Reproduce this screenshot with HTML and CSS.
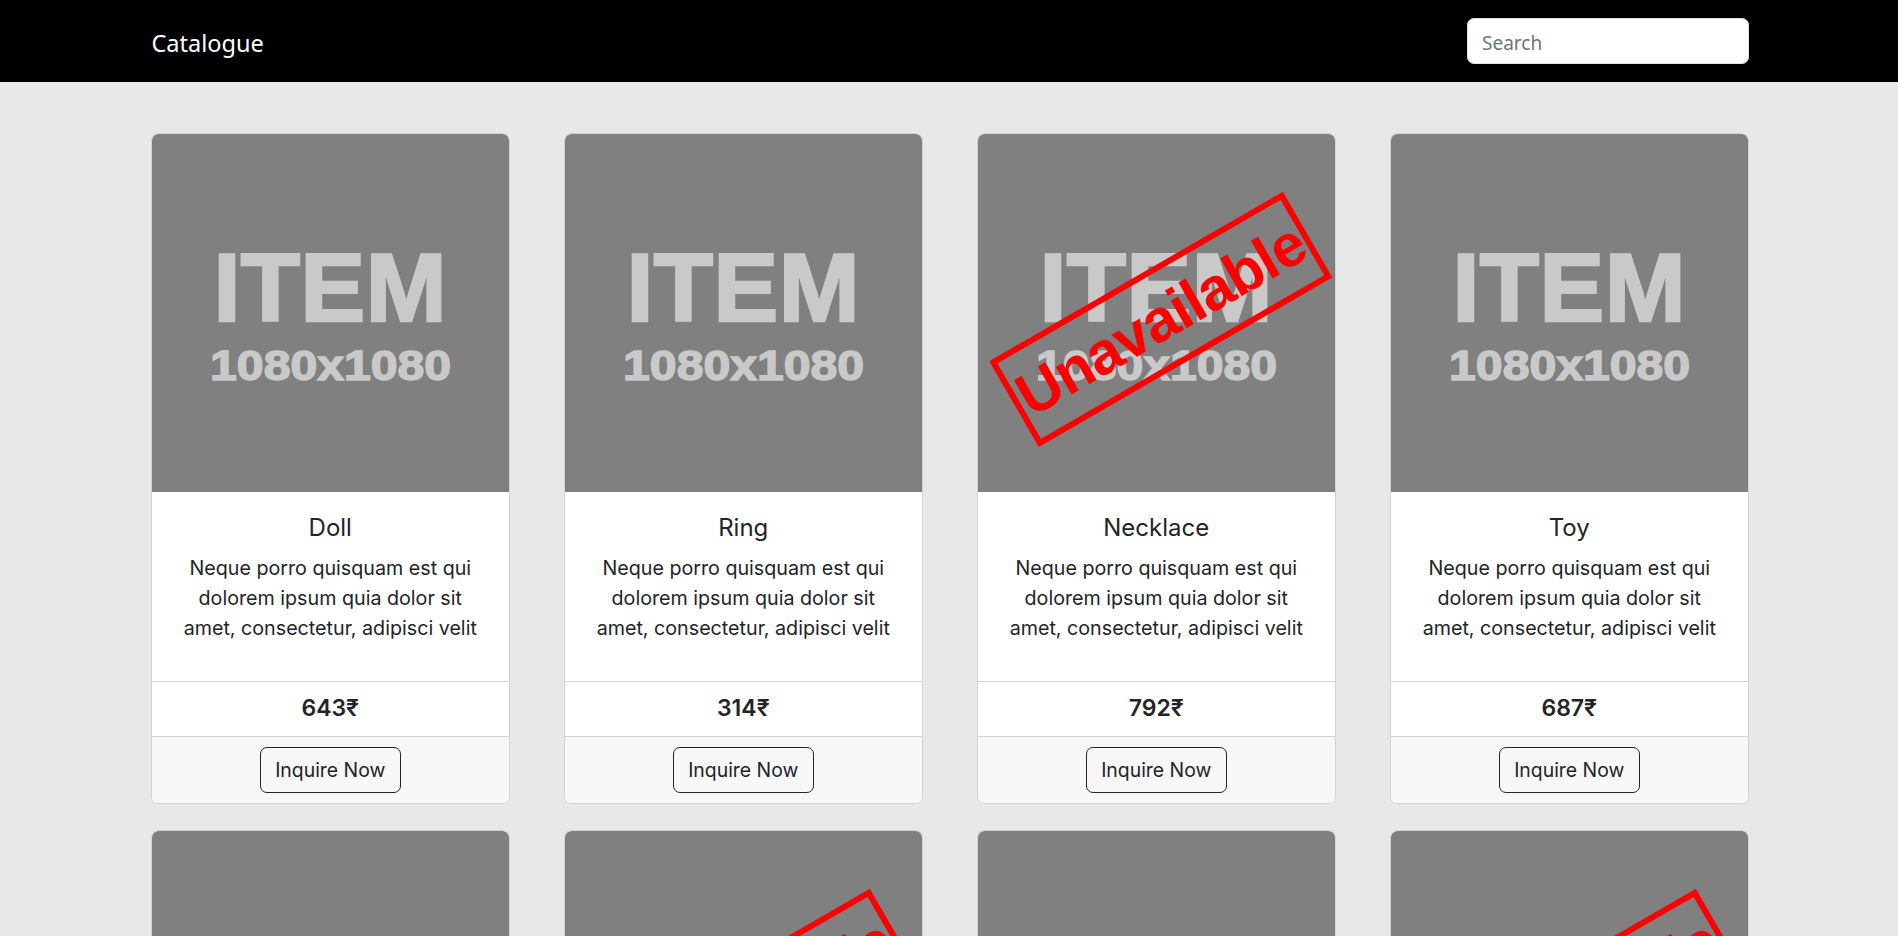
FILE: index.html
```html
<!DOCTYPE html>
<html lang="en">
<head>
<meta charset="utf-8">
<title>Catalogue</title>
<link rel="stylesheet" href="styles.css">
</head>
<body>
<header class="navbar">
  <div class="nav-inner">
    <a class="brand" href="#">Catalogue</a>
    <input class="search" type="search" placeholder="Search">
  </div>
</header>
<main class="catalogue">
  <article class="card">
    <div class="card-img">
      <div class="ph"><span class="ph-title">ITEM</span><span class="ph-size">1080x1080</span></div>
    </div>
    <div class="card-body">
      <h5 class="card-title">Doll</h5>
      <p class="card-text">Neque porro quisquam est qui dolorem ipsum quia dolor sit amet, consectetur, adipisci velit</p>
    </div>
    <div class="card-price">643₹</div>
    <div class="card-footer"><button class="btn">Inquire Now</button></div>
  </article>
  <article class="card">
    <div class="card-img">
      <div class="ph"><span class="ph-title">ITEM</span><span class="ph-size">1080x1080</span></div>
    </div>
    <div class="card-body">
      <h5 class="card-title">Ring</h5>
      <p class="card-text">Neque porro quisquam est qui dolorem ipsum quia dolor sit amet, consectetur, adipisci velit</p>
    </div>
    <div class="card-price">314₹</div>
    <div class="card-footer"><button class="btn">Inquire Now</button></div>
  </article>
  <article class="card">
    <div class="card-img">
      <div class="ph"><span class="ph-title">ITEM</span><span class="ph-size">1080x1080</span></div>
      <div class="stamp">Unavailable</div>
    </div>
    <div class="card-body">
      <h5 class="card-title">Necklace</h5>
      <p class="card-text">Neque porro quisquam est qui dolorem ipsum quia dolor sit amet, consectetur, adipisci velit</p>
    </div>
    <div class="card-price">792₹</div>
    <div class="card-footer"><button class="btn">Inquire Now</button></div>
  </article>
  <article class="card">
    <div class="card-img">
      <div class="ph"><span class="ph-title">ITEM</span><span class="ph-size">1080x1080</span></div>
    </div>
    <div class="card-body">
      <h5 class="card-title">Toy</h5>
      <p class="card-text">Neque porro quisquam est qui dolorem ipsum quia dolor sit amet, consectetur, adipisci velit</p>
    </div>
    <div class="card-price">687₹</div>
    <div class="card-footer"><button class="btn">Inquire Now</button></div>
  </article>
  <article class="card">
    <div class="card-img">
      <div class="ph"><span class="ph-title">ITEM</span><span class="ph-size">1080x1080</span></div>
    </div>
    <div class="card-body">
      <h5 class="card-title">Bracelet</h5>
      <p class="card-text">Neque porro quisquam est qui dolorem ipsum quia dolor sit amet, consectetur, adipisci velit</p>
    </div>
    <div class="card-price">455₹</div>
    <div class="card-footer"><button class="btn">Inquire Now</button></div>
  </article>
  <article class="card">
    <div class="card-img">
      <div class="ph"><span class="ph-title">ITEM</span><span class="ph-size">1080x1080</span></div>
      <div class="stamp">Unavailable</div>
    </div>
    <div class="card-body">
      <h5 class="card-title">Watch</h5>
      <p class="card-text">Neque porro quisquam est qui dolorem ipsum quia dolor sit amet, consectetur, adipisci velit</p>
    </div>
    <div class="card-price">921₹</div>
    <div class="card-footer"><button class="btn">Inquire Now</button></div>
  </article>
  <article class="card">
    <div class="card-img">
      <div class="ph"><span class="ph-title">ITEM</span><span class="ph-size">1080x1080</span></div>
    </div>
    <div class="card-body">
      <h5 class="card-title">Earrings</h5>
      <p class="card-text">Neque porro quisquam est qui dolorem ipsum quia dolor sit amet, consectetur, adipisci velit</p>
    </div>
    <div class="card-price">538₹</div>
    <div class="card-footer"><button class="btn">Inquire Now</button></div>
  </article>
  <article class="card">
    <div class="card-img">
      <div class="ph"><span class="ph-title">ITEM</span><span class="ph-size">1080x1080</span></div>
      <div class="stamp">Unavailable</div>
    </div>
    <div class="card-body">
      <h5 class="card-title">Ball</h5>
      <p class="card-text">Neque porro quisquam est qui dolorem ipsum quia dolor sit amet, consectetur, adipisci velit</p>
    </div>
    <div class="card-price">276₹</div>
    <div class="card-footer"><button class="btn">Inquire Now</button></div>
  </article>
</main>
</body>
</html>
```
FILE: styles.css
```css
* { box-sizing: border-box; }

html, body {
  margin: 0;
  padding: 0;
}

body {
  background: #e8e8e8;
  color: #212529;
  font-family: Inter, "Noto Sans", sans-serif;
}

.navbar {
  background: #000;
  height: 82px;
}

.nav-inner {
  width: 1599px;
  height: 82px;
  margin: 0 auto;
  padding-left: 2px;
  display: flex;
  align-items: center;
  justify-content: space-between;
}

.brand {
  font-family: "Noto Sans", "Open Sans", sans-serif;
  font-size: 23.5px;
  line-height: 36px;
  padding-top: 4px;
  color: #fff;
  text-decoration: none;
}

.search {
  width: 282px;
  height: 46px;
  border: 1px solid #dee2e6;
  border-radius: 7px;
  background: #fff;
  padding: 3px 14.5px 0;
  font-family: "Noto Sans", "Open Sans", sans-serif;
  font-size: 19px;
  color: #212529;
  outline: none;
}

.search::placeholder {
  color: #6c757d;
}

.catalogue {
  width: 1600px;
  margin: 0 auto;
  padding: 51px 0 0 1.5px;
  display: grid;
  grid-template-columns: repeat(4, 1fr);
  column-gap: 53.5px;
  row-gap: 26px;
}

.card {
  background: #fff;
  border: 1px solid #d3d3d3;
  border-radius: 7px;
  overflow: hidden;
  display: flex;
  flex-direction: column;
}

.card-img {
  position: relative;
  aspect-ratio: 1 / 1;
  background: #808080;
  border-radius: 6px 6px 0 0;
  overflow: hidden;
  display: flex;
  align-items: center;
  justify-content: center;
}

.ph {
  display: flex;
  flex-direction: column;
  align-items: center;
  gap: 7.5px;
  font-family: "Liberation Sans", Arial, sans-serif;
  font-weight: 700;
  color: #c9c9c9;
  line-height: 1;
}

.ph-title {
  font-size: 97px;
  letter-spacing: 0.5px;
  -webkit-text-stroke: 2.5px #c9c9c9;
}

.ph-size {
  font-size: 43px;
  -webkit-text-stroke: 1.5px #c9c9c9;
  transform: scaleX(1.12);
}

.stamp {
  position: absolute;
  left: 50%;
  top: 50%;
  width: 339px;
  height: 99px;
  border: 6px solid #ff0000;
  display: flex;
  align-items: center;
  justify-content: center;
  font-family: "Liberation Sans", Arial, sans-serif;
  font-weight: 700;
  font-size: 60px;
  letter-spacing: -1px;
  line-height: 1;
  color: #ff0000;
  white-space: nowrap;
  transform: translate(-50%, -50%) translate(4.8px, 6.3px) rotate(-30deg);
}

.card-body {
  padding: 21px 19.4px 37.5px;
  text-align: center;
}

.card-title {
  margin: 0 0 12.5px;
  font-size: 24px;
  font-weight: 400;
  line-height: 29px;
}

.card-text {
  margin: 0;
  font-size: 19.7px;
  line-height: 29.8px;
}

.card-price {
  border-top: 1px solid #d3d3d3;
  padding: 12.4px 0 13.1px;
  text-align: center;
  font-size: 23px;
  font-weight: 600;
  line-height: 29px;
}

.card-footer {
  border-top: 1px solid #d3d3d3;
  background: #f7f7f7;
  padding: 10px 0;
  display: flex;
  justify-content: center;
}

.btn {
  height: 46px;
  padding: 0 14.5px;
  border: 1px solid #212529;
  border-radius: 7px;
  background: transparent;
  color: #212529;
  font-family: Inter, "Noto Sans", sans-serif;
  font-size: 19.4px;
  cursor: pointer;
}
```
